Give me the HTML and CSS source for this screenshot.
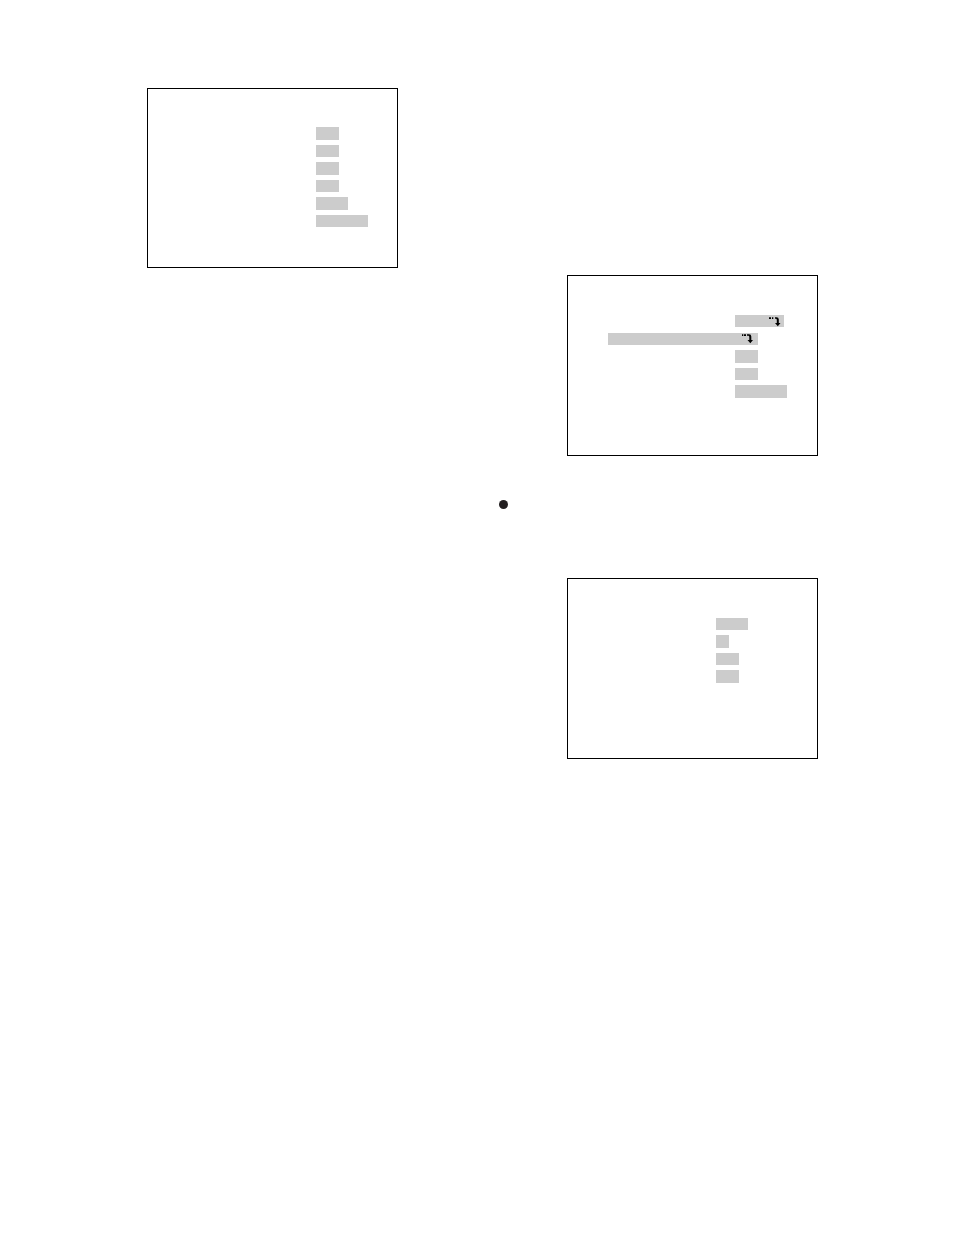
FILE: index.html
```html
<!DOCTYPE html>
<html lang="en">

<head>
    <meta charset="UTF-8">
    <meta name="viewport" content="width=device-width, initial-scale=1.0">
    <title>Menu Screens</title>
    <link rel="stylesheet" href="styles.css">
</head>

<body>
    <main class="page">
        <div class="column">
            <section class="screen screen-first">
                <div class="field field-medium tall"></div>
                <div class="field field-medium"></div>
                <div class="field field-medium tall"></div>
                <div class="field field-medium"></div>
                <div class="field field-large tall"></div>
                <div class="field field-xlarge"></div>
            </section>
        </div>

        <div class="column column-right">
            <section class="screen screen-second">
                <div class="field field-link">
                    <svg class="arrow" viewBox="0 0 12 10" width="12" height="10" aria-hidden="true">
                        <path d="M0 0.300h2v1.700H0zM3 0.300h1.300v1.700H3z" />
                        <path d="M6 0.300h1.500q2.300 0 2.300 2.300V6H11.500L8.800 9.300 6 6H7.800V3q0-1.200-1-1.200H6z" />
                    </svg>
                </div>
                <div class="field field-row">
                    <svg class="arrow" viewBox="0 0 12 10" width="12" height="10" aria-hidden="true">
                        <path d="M0 0.300h1.300v1.700H0zM2 0.300h2v1.700H2z" />
                        <path d="M5 0.300h2q2.300 0 2.300 2.300V6H11L8.300 9.300 5.500 6H7.300V3q0-1.200-1-1.200H5z" />
                    </svg>
                </div>
                <div class="field field-medium tall"></div>
                <div class="field field-medium"></div>
                <div class="field field-xlarge tall"></div>
            </section>

            <div class="bullet"></div>

            <section class="screen screen-third">
                <div class="field field-large"></div>
                <div class="field field-small tall"></div>
                <div class="field field-medium"></div>
                <div class="field field-medium tall"></div>
            </section>
        </div>
    </main>
</body>

</html>
```

FILE: styles.css
```css
* {
    box-sizing: border-box;
}

body {
    margin: 0;
    background-color: #fff;
    font-family: "Liberation Sans", Arial, sans-serif;
}

.page {
    display: grid;
    grid-template-columns: 1fr 1fr;
    column-gap: 101px;
    padding: 88px 136px 88px 79px;
}

.column-right {
    padding-top: 187px;
}

/* menu screens */
.screen {
    display: flex;
    flex-direction: column;
    gap: 5px;
    margin-left: 68px;
    padding-top: 39px;
    padding-bottom: 57px;
    border: 1px solid #000;
}

.screen-first {
    padding-top: 38px;
    padding-bottom: 40px;
    padding-left: 168px;
}

.screen-second {
    padding-left: 167px;
}

.screen-third {
    padding-bottom: 75px;
    padding-left: 148px;
}

/* highlighted values */
.field {
    height: 12px;
    background-color: #ccc;
}

.tall {
    height: 13px;
}

.field-small {
    width: 13px;
}

.field-medium {
    width: 23px;
}

.field-large {
    width: 32px;
}

.field-xlarge {
    width: 52px;
}

.field-link,
.field-row {
    display: flex;
    justify-content: flex-end;
}

.field-link {
    width: 49px;
    margin-bottom: 1px;
    padding-top: 2px;
    padding-right: 3px;
}

.field-row {
    width: 150px;
    margin-left: -127px;
    padding-top: 1px;
    padding-right: 4px;
}

.arrow {
    fill: #000;
}

.bullet {
    width: 9px;
    height: 9px;
    margin-top: 44px;
    margin-bottom: 69px;
    border-radius: 50%;
    background-color: #231f20;
}
```
